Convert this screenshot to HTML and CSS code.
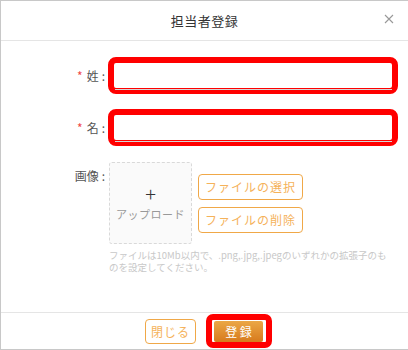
FILE: index.html
```html
<!DOCTYPE html>
<html lang="ja">
  <head>
    <meta charset="UTF-8" />
    <meta name="viewport" content="width=device-width, initial-scale=1.0" />
    <title>担当者登録</title>
    <link rel="stylesheet" href="styles.css">
  </head>
  <body>
    <div class="dialog">
      <div class="dialog-header">
        <span class="dialog-title">担当者登録</span>
        <span class="dialog-close">
          <svg width="10" height="10" viewBox="0 0 10 10">
            <path d="M1 1L9 9M9 1L1 9" stroke="#999" stroke-width="1.1" fill="none" />
          </svg>
        </span>
      </div>

      <form class="dialog-body">
        <div class="form-row">
          <label class="form-label"><span class="req">*</span>姓<span class="colon">:</span></label>
          <div class="mark">
            <input type="text" class="text-input" />
          </div>
        </div>

        <div class="form-row">
          <label class="form-label"><span class="req">*</span>名<span class="colon">:</span></label>
          <div class="mark">
            <input type="text" class="text-input" />
          </div>
        </div>

        <div class="form-row image-row">
          <label class="form-label">画像<span class="colon">:</span></label>
          <div class="image-field">
            <div class="upload-line">
              <div class="upload-box">
                <span class="upload-plus">+</span>
                <span class="upload-text">アップロード</span>
              </div>
              <div class="file-buttons">
                <button type="button" class="btn-line">ファイルの選択</button>
                <button type="button" class="btn-line">ファイルの削除</button>
              </div>
            </div>
            <p class="hint">ファイルは10Mb以内で、.png,.jpg,.jpegのいずれかの拡張子のものを設定してください。</p>
          </div>
        </div>
      </form>

      <div class="dialog-footer">
        <button type="button" class="btn-line btn-close">閉じる</button>
        <div class="mark mark-btn">
          <button type="button" class="btn-primary">登 録</button>
        </div>
      </div>
    </div>
  </body>
</html>
```

FILE: styles.css
```css
html,
body {
  margin: 0;
  padding: 0;
}
body {
  font-family: "Noto Sans CJK JP", "Noto Sans", sans-serif;
  background: #fff;
  color: #555;
}
.dialog {
  width: 412px;
  height: 350px;
  box-sizing: border-box;
  border: 1px solid #c8c8c8;
  border-right: none;
  display: flex;
  flex-direction: column;
  overflow: hidden;
}
.dialog-header {
  height: 39px;
  width: 407px;
  border-bottom: 1px solid #e5e5e5;
  display: flex;
  align-items: center;
  justify-content: center;
  position: relative;
}
.dialog-title {
  font-size: 13px;
  color: #333;
  letter-spacing: 0.5px;
}
.dialog-close {
  position: absolute;
  right: 14px;
  top: 13px;
  line-height: 0;
}
.dialog-body {
  flex: 1;
  padding-top: 16px;
  width: 407px;
}
.form-row {
  display: flex;
  align-items: center;
  margin-bottom: 15px;
}
.form-label {
  width: 107px;
  padding-right: 3px;
  box-sizing: border-box;
  text-align: right;
  font-size: 12px;
  color: #555;
}
.req {
  color: #f04848;
  margin-right: 4px;
}
.colon {
  margin-left: 3px;
}
.mark {
  border: 6px solid #ff0000;
  border-radius: 8px;
  background: #fff;
}
.form-row .mark {
  width: 277px;
  height: 25px;
  padding: 0 0 0 1px;
}
.text-input {
  width: 100%;
  height: 24px;
  box-sizing: border-box;
  border: none;
  border-bottom: 1px solid #d5d5d5;
  outline: none;
  padding: 0 6px;
  background: transparent;
}
.image-row {
  align-items: flex-start;
  margin-top: 16px;
  margin-bottom: 0;
}
.image-row .form-label {
  line-height: 28px;
}
.image-field {
  margin-left: 1px;
}
.upload-line {
  display: flex;
  align-items: center;
}
.upload-box {
  width: 81px;
  height: 80px;
  border: 1px dashed #d9d9d9;
  border-radius: 3px;
  background: #fafafa;
  display: flex;
  flex-direction: column;
  align-items: center;
  justify-content: center;
  color: #999;
}
.upload-plus {
  font-size: 20px;
  line-height: 18px;
  color: #333;
  font-weight: 200;
}
.upload-text {
  font-size: 11px;
  margin-top: 3px;
  letter-spacing: 0.5px;
}
.file-buttons {
  display: flex;
  flex-direction: column;
  gap: 7px;
  margin-left: 6px;
}
.btn-line {
  font-family: inherit;
  width: 105px;
  height: 26px;
  background: #fff;
  border: 1px solid #f0a848;
  border-radius: 4px;
  color: #f5b25a;
  font-size: 12px;
  letter-spacing: 1px;
  padding: 0;
  cursor: pointer;
}
.hint {
  margin: 5px 0 0;
  width: 278px;
  font-size: 9.5px;
  line-height: 12px;
  color: #c8c8c8;
}
.dialog-footer {
  height: 37px;
  width: 407px;
  border-top: 1px solid #e5e5e5;
  display: flex;
  align-items: center;
  justify-content: center;
  gap: 10px;
  padding-left: 8px;
  box-sizing: border-box;
}
.btn-close {
  width: 51px;
  height: 25px;
  margin-top: 1px;
}
.mark-btn {
  padding: 1px 3px 0 2px;
  border-radius: 7px;
}
.btn-primary {
  display: block;
  font-family: inherit;
  width: 49px;
  height: 21px;
  border: none;
  border-radius: 2px;
  background: linear-gradient(#eba746, #d77a1c);
  color: #fff;
  font-size: 12px;
  padding: 0;
  cursor: pointer;
}
```
